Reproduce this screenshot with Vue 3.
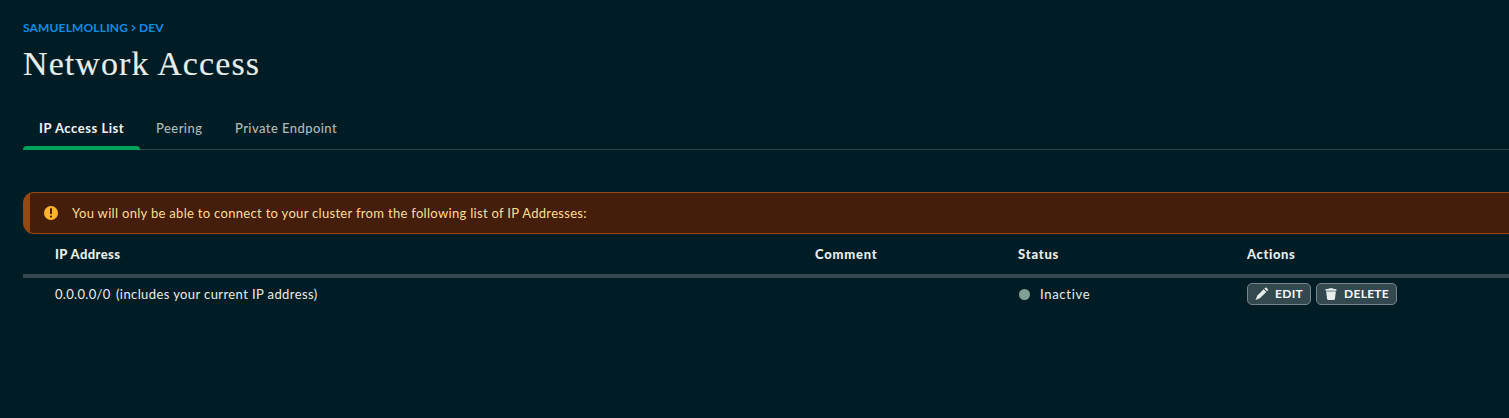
<script setup>
const tabs = [
  { label: 'IP Access List', active: true, cls: 'tab-access' },
  { label: 'Peering', active: false, cls: 'tab-peering' },
  { label: 'Private Endpoint', active: false, cls: 'tab-endpoint' },
]
</script>

<template>
  <main class="page">
    <nav class="crumbs"><span class="org">SAMUELMOLLING</span><svg class="sep" width="5" height="8" viewBox="0 0 5 8"><path d="M.8 1.2L4 4 .8 6.8" fill="none" stroke="#0b8de4" stroke-width="1.4" /></svg><span class="project">DEV</span></nav>
    <h1 class="title">Network Access</h1>

    <div class="tabs">
      <button v-for="t in tabs" :key="t.label" class="tab" :class="[t.cls, { active: t.active }]"><span>{{ t.label }}</span></button>
    </div>

    <div class="banner">
      <svg class="warn" width="14" height="14" viewBox="0 0 14 14">
        <circle cx="7" cy="7" r="7" fill="#ffb42c" />
        <path d="M6 3a1 1 0 0 1 2 0v4.3a1 1 0 0 1-2 0z" fill="#441e0b" />
        <circle cx="7" cy="10.6" r="1.1" fill="#441e0b" />
      </svg>
      <span class="banner-text">You will only be able to connect to your cluster from the following list of IP Addresses:</span>
    </div>

    <div class="row head">
      <span><b class="h-ip">IP Address</b></span>
      <span><b class="h-comment">Comment</b></span>
      <span><b class="h-status">Status</b></span>
      <span><b class="h-actions">Actions</b></span>
    </div>
    <div class="row body">
      <span class="address"><i class="cidr">0.0.0.0/0</i><i class="note">(includes your current IP address)</i></span>
      <span></span>
      <span class="status"><em class="dot"></em><i class="state">Inactive</i></span>
      <span class="actions">
        <button class="btn edit">
          <svg width="14" height="14" viewBox="0 0 14 14" fill="#e8edeb">
            <path d="M8.7 2.3l2.6 2.6-6.5 6.4L.6 13l1.6-4.2z" />
            <path d="M9.4 1.6l.8-.8a.9.9 0 0 1 1.3 0l1.3 1.3a.9.9 0 0 1 0 1.3l-.8.8z" />
          </svg>
          <span>EDIT</span>
        </button>
        <button class="btn delete">
          <svg width="14" height="14" viewBox="0 0 14 14">
            <path d="M5 1.2h4l.5.9h2.3a.7.7 0 0 1 .7.7v1h-11v-1a.7.7 0 0 1 .7-.7h2.3z" fill="#e8edeb" />
            <path d="M2 3.8h10v1H2z" fill="#a3adad" />
            <path d="M2.2 4.8h9.6l-.9 7.3a.9.9 0 0 1-.9.8H4a.9.9 0 0 1-.9-.8z" fill="#e8edeb" />
          </svg>
          <span>DELETE</span>
        </button>
      </span>
    </div>
  </main>
</template>

<style>
html, body { margin: 0; background: #001d26; overflow: hidden; }
</style>

<style scoped>
.page {
  box-sizing: border-box;
  height: 418px;
  padding: 20px 0 0 23px;
  background: #001d26;
  color: #e8edeb;
  font: 13px/20px Lato, "Liberation Sans", sans-serif;
  letter-spacing: .31px;
  white-space: nowrap;
}
.page * { box-sizing: border-box; }
i { font-style: normal; }
button { font: inherit; color: inherit; letter-spacing: inherit; margin: 0; }
.crumbs { display: flex; align-items: center; height: 16px; line-height: 16px; font-size: 12px; font-weight: 700; color: #0b8de4; letter-spacing: .15px; }
.org { width: 108px; }
.project { margin-left: 3px; }
.title { margin: 8px 0 0; height: 40px; font: 400 34px/40px "Liberation Serif", serif; letter-spacing: 1.08px; -webkit-text-stroke: .12px #e8edeb; }
.tabs { display: flex; margin-top: 25px; height: 41px; border-bottom: 1px solid #2b424b; }
.tab { height: 41px; padding: 0 16px 4px; border: 0; background: none; position: relative; color: #b0bab9; font-weight: 500; text-align: left; }
.tab.active { color: #f2f5f4; font-weight: 700; letter-spacing: .55px; }
.tab.active::after { content: ""; position: absolute; inset: auto 0 0 0; height: 4px; border-radius: 4px 4px 0 0; background: #00a35c; }
.tab-access { width: 117px; }
.tab-peering { width: 79px; letter-spacing: .45px; }
.tab-endpoint { width: 134px; letter-spacing: .43px; }
.banner {
  display: flex; align-items: center; margin-top: 42px; height: 42px; padding-left: 20px;
  position: relative; overflow: hidden;
  border: 1px solid #944812; border-right: 0; border-radius: 11px 0 0 11px;
  background: linear-gradient(90deg, #944812 6px, #441e0b 6px); color: #ffdd91;
}
.banner-text { margin-left: 14px; }
.row { display: grid; grid-template-columns: 760px 203px 229px 1fr; padding-left: 32px; align-items: center; }
.head { height: 44px; padding-bottom: 1px; border-bottom: 4px solid #344850; font-weight: 700; }
.h-ip { letter-spacing: .4px; }
.h-comment { letter-spacing: .78px; }
.h-status { letter-spacing: .8px; }
.h-actions { letter-spacing: .6px; }
.body { height: 33px; padding-bottom: 1px; }
.cidr { display: inline-block; width: 61px; }
.note { letter-spacing: .4px; }
.status { display: flex; align-items: center; }
.state { letter-spacing: .7px; }
.dot { width: 11px; height: 11px; border-radius: 50%; background: #82a194; margin: 0 10px 0 1px; }
.actions { display: flex; gap: 5px; }
.btn { display: flex; align-items: center; height: 22px; padding: 0 0 0 7px; border: 1px solid #77868a; border-radius: 5px; background: #344850; color: #f9fbfa; font-size: 12px; font-weight: 700; letter-spacing: .3px; }
.btn span { margin-left: 6px; }
.edit { width: 64px; }
.delete { width: 81px; }
</style>
